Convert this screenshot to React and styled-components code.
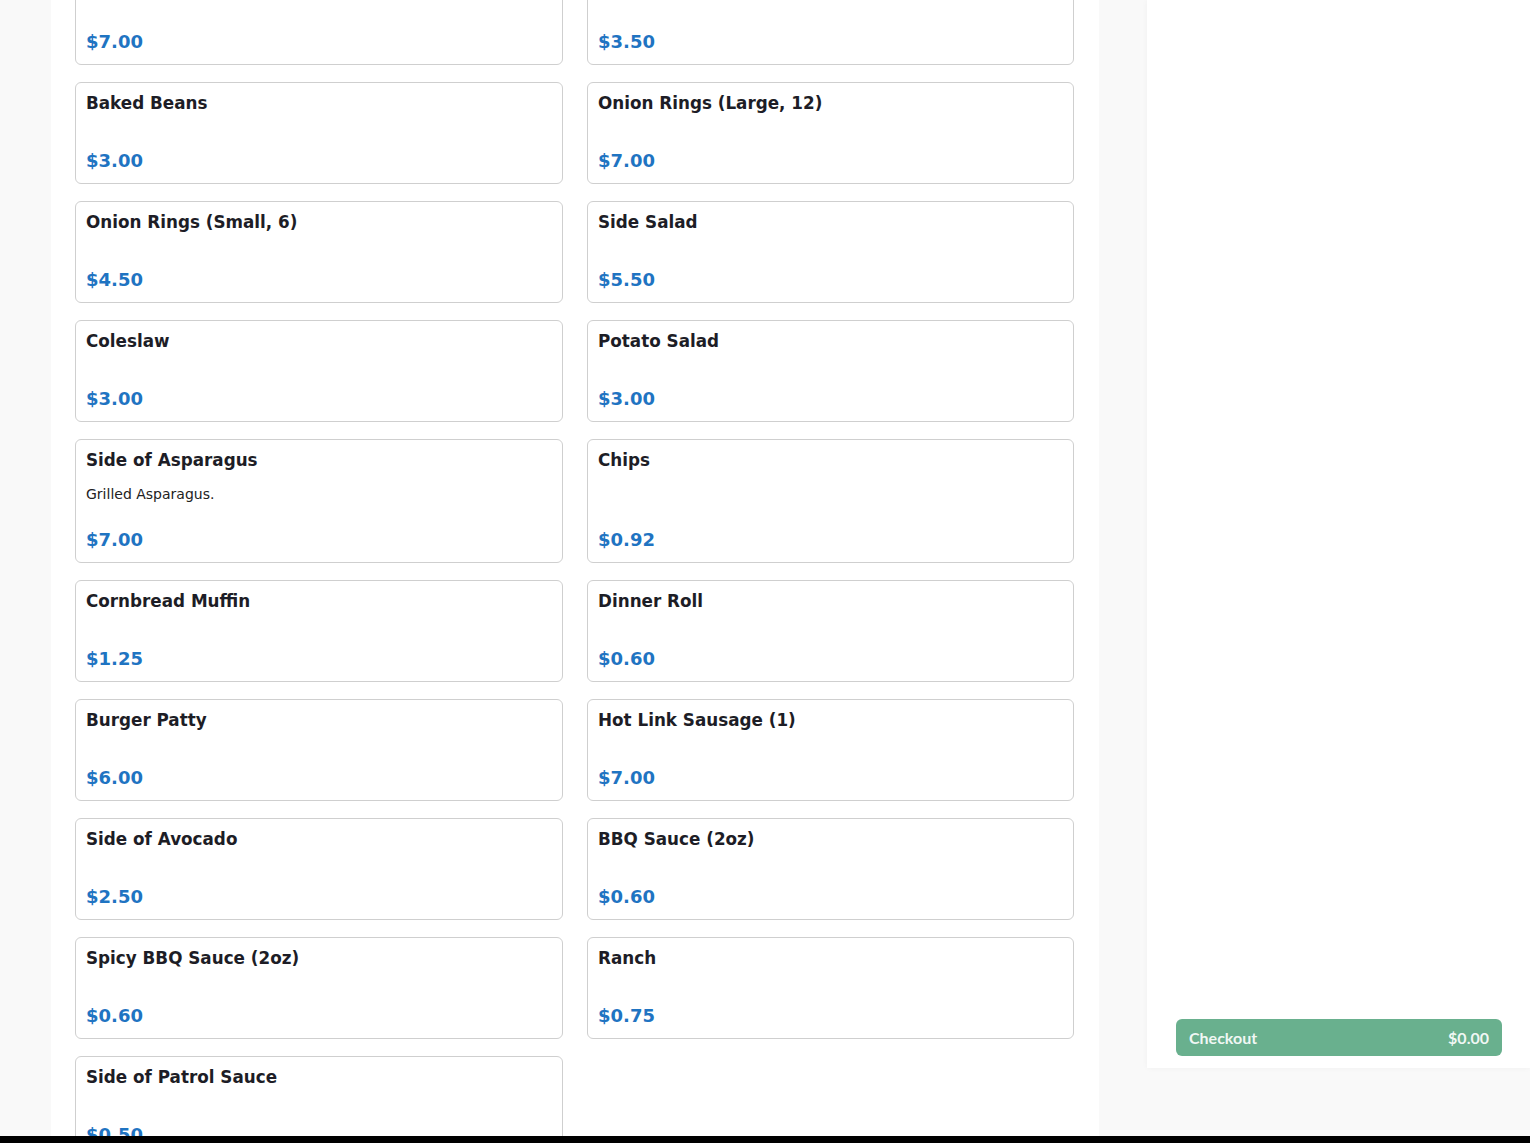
import React from "react";
import styled, { createGlobalStyle } from "styled-components";

const Global = createGlobalStyle`
  html, body { margin: 0; padding: 0; background: #f9f9f9; }
  body { font-family: "DejaVu Sans", Verdana, sans-serif; overflow: hidden; }
  * { box-sizing: border-box; }
`;

const Page = styled.div`
  display: flex;
  align-items: flex-start;
  height: 1136px;
  overflow: hidden;
  background: #f9f9f9;
`;

const Main = styled.main`
  margin-left: 51px;
  width: 1048px;
  height: 1136px;
  background: #ffffff;
  padding: 0 26px 0 24px;
  overflow: hidden;
`;

const Grid = styled.div`
  display: grid;
  grid-template-columns: 488px 487px;
  column-gap: 24px;
  row-gap: 17px;
  margin-top: -37px; /* scrolled position */
`;

const Card = styled.div`
  display: flex;
  flex-direction: column;
  min-height: 102px;
  padding: 10px 10px 12px 10px;
  border: 1px solid #cfcfcf;
  border-radius: 6px;
  background: #fff;
`;

const Title = styled.h3`
  margin: 0 0 16px 0;
  font-size: 16.8px;
  line-height: 20px;
  font-weight: 700;
  color: #1d1d26;
`;

const Desc = styled.p`
  margin: 1px 0 26.6px 0;
  font-size: 14px;
  line-height: 15px;
  color: #222;
`;

const Price = styled.div`
  margin-top: auto;
  font-size: 18px;
  line-height: 21px;
  font-weight: 700;
  color: #1f74c2;
`;

const Sidebar = styled.aside`
  margin-left: 48px;
  width: 383px;
  height: 1068px;
  background: #fff;
  box-shadow: 0 0 6px rgba(0, 0, 0, 0.04);
  display: flex;
  flex-direction: column;
  justify-content: flex-end;
  padding: 0 28px 12px 29px;
`;

const CheckoutButton = styled.button`
  display: flex;
  align-items: center;
  justify-content: space-between;
  height: 37px;
  width: 100%;
  padding: 0 13px;
  border: none;
  border-radius: 6px;
  background: #69b08e;
  color: rgba(255, 255, 255, 0.92);
  font-family: Lato, "Open Sans", sans-serif;
  font-size: 16px;
  font-weight: 700;
  cursor: pointer;
`;

const Footer = styled.div`
  height: 7px;
  background: #000;
`;

const items = [
  { name: "French Fries (Large)", price: "$7.00" },
  { name: "French Fries (Small)", price: "$3.50" },
  { name: "Baked Beans", price: "$3.00" },
  { name: "Onion Rings (Large, 12)", price: "$7.00" },
  { name: "Onion Rings (Small, 6)", price: "$4.50" },
  { name: "Side Salad", price: "$5.50" },
  { name: "Coleslaw", price: "$3.00" },
  { name: "Potato Salad", price: "$3.00" },
  { name: "Side of Asparagus", desc: "Grilled Asparagus.", price: "$7.00" },
  { name: "Chips", price: "$0.92" },
  { name: "Cornbread Muffin", price: "$1.25" },
  { name: "Dinner Roll", price: "$0.60" },
  { name: "Burger Patty", price: "$6.00" },
  { name: "Hot Link Sausage (1)", price: "$7.00" },
  { name: "Side of Avocado", price: "$2.50" },
  { name: "BBQ Sauce (2oz)", price: "$0.60" },
  { name: "Spicy BBQ Sauce (2oz)", price: "$0.60" },
  { name: "Ranch", price: "$0.75" },
  { name: "Side of Patrol Sauce", price: "$0.50" },
];

export default function App() {
  return (
    <>
      <Global />
      <Page>
        <Main>
          <Grid>
            {items.map((it, i) => (
              <Card key={i}>
                <Title>{it.name}</Title>
                {it.desc && <Desc>{it.desc}</Desc>}
                <Price>{it.price}</Price>
              </Card>
            ))}
          </Grid>
        </Main>
        <Sidebar>
          <CheckoutButton>
            <span>Checkout</span>
            <span>$0.00</span>
          </CheckoutButton>
        </Sidebar>
      </Page>
      <Footer />
    </>
  );
}
